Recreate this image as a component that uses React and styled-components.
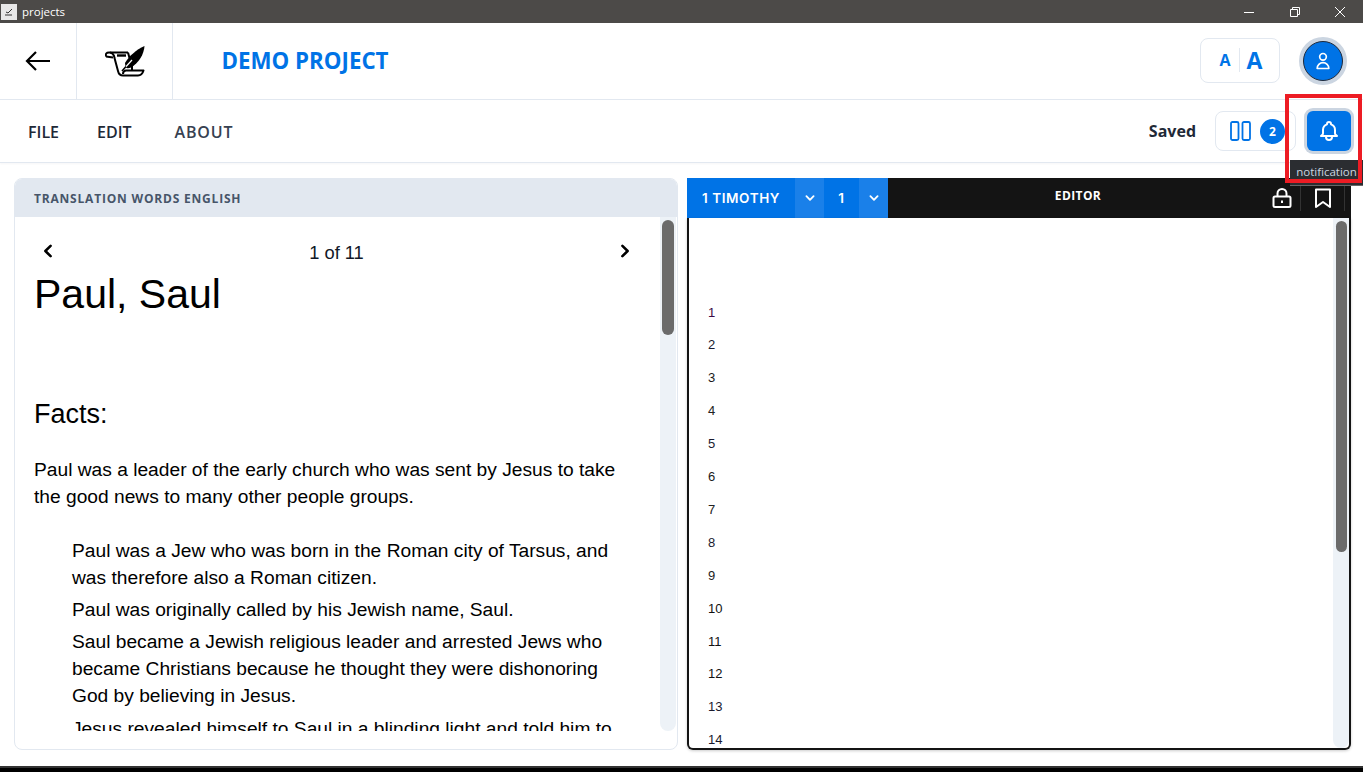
import React from "react";
import styled, { createGlobalStyle } from "styled-components";
import { HiOutlineBell, HiOutlineUser, HiChevronDown, HiChevronLeft, HiChevronRight } from "react-icons/hi";

const GlobalStyle = createGlobalStyle`
  html, body { margin: 0; padding: 0; background: #fff; overflow: hidden; }
  * { box-sizing: border-box; }
`;

const uiFont = `"Open Sans", "Noto Sans", sans-serif`;
const docFont = `"Liberation Sans", Arial, sans-serif`;
const blue = "#0073e6";

const Frame = styled.div`
  position: relative;
  width: 1363px;
  height: 772px;
  display: flex;
  flex-direction: column;
  font-family: ${uiFont};
  background: #fff;
`;

const TitleBar = styled.div`
  height: 23px;
  flex: none;
  background: #4c4a48;
  color: #fff;
  display: flex;
  align-items: center;
  padding-left: 1px;
  font-size: 11.5px;
`;
const AppIcon = styled.span`
  width: 16px;
  height: 16px;
  background: #e8e8e8;
  display: flex;
  align-items: center;
  justify-content: center;
  margin-right: 5px;
`;
const WindowButtons = styled.div`
  margin-left: auto;
  display: flex;
  align-items: center;
  padding-right: 17px;
  gap: 33.5px;
`;

const Header = styled.header`
  height: 77px;
  flex: none;
  display: flex;
  align-items: stretch;
  border-bottom: 1px solid #e2e8f0;
`;
const HeaderCell = styled.div`
  width: ${(p) => p.$w}px;
  flex: none;
  display: flex;
  align-items: center;
  justify-content: center;
  border-right: 1px solid #e2e8f0;
`;
const ProjectName = styled.h1`
  margin: 0 0 2px 48.5px;
  align-self: center;
  font-size: 22.3px;
  font-weight: 700;
  color: ${blue};
`;
const HeaderRight = styled.div`
  margin-left: auto;
  display: flex;
  align-items: center;
  padding-right: 16px;
`;
const FontSizer = styled.div`
  width: 80px;
  height: 45px;
  border: 1px solid #e2e8f0;
  border-radius: 8px;
  display: flex;
  align-items: center;
  justify-content: center;
  margin-right: 19px;
  margin-top: -2px;
  padding-left: 2px;
  color: ${blue};
  font-weight: 700;
`;
const SmallA = styled.span`
  font-size: 16px;
  padding-right: 8px;
  border-right: 1px solid #e2e8f0;
  line-height: 24px;
  margin-right: 7px;
`;
const BigA = styled.span`
  font-size: 23px;
  line-height: 24px;
`;
const Avatar = styled.div`
  width: 40px;
  height: 40px;
  margin: 0 4px;
  border-radius: 50%;
  background: ${blue};
  border: 1px solid #1e293b;
  box-shadow: 0 0 0 4px #cbd5e1;
  color: #fff;
  display: flex;
  align-items: center;
  justify-content: center;
`;

const NavBar = styled.nav`
  height: 63px;
  flex: none;
  display: flex;
  align-items: center;
  padding-left: 28px;
  border-bottom: 1px solid #e2e8f0;
  box-shadow: 0 1px 2px rgba(15, 23, 42, 0.04);
`;
const MenuItem = styled.span`
  font-size: 16px;
  font-weight: 600;
  padding-top: 2px;
  color: ${(p) => p.$color || "#1f2937"};
  margin-right: ${(p) => p.$gap}px;
  letter-spacing: ${(p) => p.$track || 0}px;
`;
const NavRight = styled.div`
  margin-left: auto;
  display: flex;
  align-items: center;
  padding-right: 12px;
`;
const Saved = styled.span`
  font-size: 16px;
  font-weight: 700;
  color: #1f2937;
  margin-right: 19px;
`;
const PaneButton = styled.div`
  width: 81px;
  height: 40px;
  border: 1px solid #e2e8f0;
  border-radius: 8px;
  display: flex;
  align-items: center;
  padding-left: 14px;
  gap: 9px;
  margin-right: 11px;
  color: ${blue};
`;
const Badge = styled.span`
  width: 25px;
  height: 25px;
  border-radius: 50%;
  background: ${blue};
  color: #fff;
  font-size: 12px;
  font-weight: 700;
  display: flex;
  align-items: center;
  justify-content: center;
`;
const BellButton = styled.div`
  width: 44px;
  height: 40px;
  border-radius: 6px;
  background: ${blue};
  color: #fff;
  box-shadow: 0 0 0 3px #cbd5e1;
  display: flex;
  align-items: center;
  justify-content: center;
`;

const Main = styled.main`
  flex: 1;
  min-height: 0;
  padding: 15px 0 16px 14px;
  display: grid;
  grid-template-columns: 664px 664px;
  grid-template-rows: minmax(0, 1fr);
  column-gap: 9px;
`;

const LeftPanel = styled.section`
  border: 1px solid #e2e8f0;
  border-radius: 8px;
  overflow: hidden;
  display: flex;
  flex-direction: column;
`;
const LeftHead = styled.div`
  height: 38px;
  flex: none;
  background: #e2e8f0;
  display: flex;
  align-items: center;
  padding-left: 19px;
  font-size: 12px;
  font-weight: 700;
  letter-spacing: 0.8px;
  color: #475569;
`;
const LeftBody = styled.div`
  height: 514px;
  flex: none;
  display: flex;
  padding-right: 1px;
`;
const Article = styled.article`
  flex: 1;
  min-width: 0;
  overflow: hidden;
  padding: 17px 24px 0 19px;
  font-family: ${docFont};
  color: #000;
  font-size: 19.2px;
  line-height: 26.88px;
`;
const Pager = styled.div`
  height: 34px;
  display: flex;
  align-items: center;
  justify-content: space-between;
  padding-left: 1px;
  margin-right: -2px;
`;
const PageLabel = styled.span`
  color: #111827;
  font-size: 18.3px;
  padding-top: 4px;
`;
const Title = styled.h1`
  margin: 2px 0 0;
  font-size: 41px;
  font-weight: 400;
  line-height: 48px;
`;
const Subtitle = styled.h2`
  margin: 78px 0 0;
  font-size: 27px;
  font-weight: 400;
  line-height: 36px;
`;
const Para = styled.p`
  margin: 25px 0 0;
`;
const PointList = styled.ul`
  list-style: none;
  margin: 27px 0 0;
  padding: 0 0 0 38px;
`;
const Point = styled.li`
  margin-bottom: 5.5px;
`;

const Track = styled.div`
  width: 16px;
  flex: none;
  background: #edf2f7;
  border-radius: 0 0 8px 8px;
  padding: ${(p) => p.$pad};
`;
const Thumb = styled.div`
  height: ${(p) => p.$h}px;
  background: #6b6b6b;
  border-radius: 8px;
`;

const RightPanel = styled.section`
  display: flex;
  flex-direction: column;
  min-height: 0;
`;
const EditorHead = styled.div`
  height: 40px;
  flex: none;
  background: #141414;
  display: flex;
  align-items: stretch;
  color: #fff;
`;
const RefCell = styled.div`
  width: ${(p) => p.$w}px;
  background: ${(p) => (p.$light ? "#1a80e9" : blue)};
  display: flex;
  align-items: center;
  justify-content: center;
  font-family: "Inter", ${uiFont};
  font-size: 13.5px;
  font-weight: 600;
  letter-spacing: 0.6px;
`;
const EditorTitle = styled.div`
  flex: 1;
  display: flex;
  align-items: center;
  justify-content: center;
  padding-bottom: 5px;
  padding-left: 5px;
  font-size: 12px;
  font-weight: 700;
  letter-spacing: 0.4px;
`;
const HeadIcons = styled.div`
  display: flex;
  align-items: center;
  padding-right: 6px;
`;
const HeadIcon = styled.span`
  width: ${(p) => p.$w}px;
  height: 26px;
  display: flex;
  align-items: center;
  justify-content: center;
  border-right: 1px solid #333;
`;
const EditorBody = styled.div`
  flex: 1;
  min-height: 0;
  display: flex;
  border: 2px solid #141414;
  border-top: 0;
  border-radius: 0 0 6px 6px;
  box-shadow: 0 1px 3px rgba(0, 0, 0, 0.2);
  overflow: hidden;
`;
const Verses = styled.div`
  flex: 1;
  overflow: hidden;
  padding: 77.6px 0 0 19px;
  font-family: ${docFont};
  font-size: 13px;
`;
const VerseNo = styled.div`
  height: 32.9px;
  line-height: 33px;
  color: ${(p) => p.$color || "#1a1a2e"};
`;

const TaskBar = styled.div`
  height: 6px;
  flex: none;
  background: #000;
  border-top: 2px solid #333;
`;

const Highlight = styled.div`
  position: absolute;
  left: 1285px;
  top: 94px;
  width: 77px;
  height: 89px;
  border: 4px solid #ed1c24;
  z-index: 3;
  pointer-events: none;
`;
const Tooltip = styled.div`
  position: absolute;
  left: 1290px;
  top: 160px;
  width: 73px;
  height: 26px;
  padding-bottom: 2px;
  background: #2b2d31;
  color: #cbd5e1;
  font-size: 11.5px;
  display: flex;
  align-items: center;
  justify-content: center;
  z-index: 2;
  border-bottom: 1px solid #666;
`;

const BackArrow = () => (
  <svg width="28" height="24" viewBox="0 0 28 24" fill="none" stroke="#000" strokeWidth="2.2">
    <path d="M26 12H3M12 3l-9 9 9 9" />
  </svg>
);

const ScrollLogo = () => (
  <svg width="40" height="31" viewBox="0 0 40 31" fill="none" stroke="#000" strokeWidth="2" strokeLinejoin="round">
    <path d="M1 10.500Q0 6.500 4 6.500H23" />
    <path d="M1 10.500L8 11.500" />
    <path d="M5 6.500Q9 7.500 9.500 12L13 25Q14 29.500 18 29.500H33Q37 29.500 38.500 24.500H21Q18 24.500 18 28" />
    <path d="M23 6.500L24.500 12" />
    <path d="M12 9.500H21" strokeWidth="2.400" />
    <path d="M27 20V24" />
    <path d="M20 17C24 10 31 4 39.500 0C39 8 34 17 26 21.500C24 22.500 21.500 22.500 20.500 21.500Z" fill="#000" stroke="none" />
    <path d="M17 25L27 14" stroke="#fff" strokeWidth="1.200" />
    <path d="M17 25L21 20.500" stroke="#000" strokeWidth="1.600" />
  </svg>
);

const PanesIcon = () => (
  <svg width="21" height="20" viewBox="0 0 21 20" fill="none" stroke={blue} strokeWidth="1.800">
    <rect x="1" y="1" width="7.500" height="18" rx="1.500" />
    <rect x="12.500" y="1" width="7.500" height="18" rx="1.500" />
  </svg>
);

const LockIcon = () => (
  <svg width="20" height="20" viewBox="0 0 20 20" fill="none" stroke="#fff" strokeWidth="2">
    <rect x="1.500" y="8.500" width="17" height="10.500" rx="1.500" />
    <path d="M5.500 8.500V5.500a4.500 4.500 0 0 1 9 0v3" />
    <path d="M10 12.500v2.500" />
  </svg>
);

const BookmarkIcon = () => (
  <svg width="18" height="20" viewBox="0 0 18 20" fill="none" stroke="#fff" strokeWidth="2" strokeLinejoin="round">
    <path d="M2 1.500h14V19l-7-5-7 5z" />
  </svg>
);

const verseColors = ["#3b0a45", "#1a1a2e", "#1a1a1a", "#222", "#1a1a2e", "#1a1a1a", "#222", "#1a1a2e", "#222", "#111", "#111", "#111", "#1a1a2e", "#1a1a2e"];

export default function App() {
  return (
    <Frame>
      <GlobalStyle />
      <TitleBar>
        <AppIcon>
          <svg width="10" height="10" viewBox="0 0 10 10" fill="none" stroke="#333" strokeWidth="1">
            <path d="M1 8h7M2 5l2 1 4-4" />
          </svg>
        </AppIcon>
        projects
        <WindowButtons>
          <svg width="12" height="12" viewBox="0 0 12 12" stroke="#fff" fill="none"><path d="M1 6.500h10" /></svg>
          <svg width="12" height="12" viewBox="0 0 12 12" stroke="#fff" fill="none"><path d="M1.500 3.500h7v7h-7zM3.500 3.500v-2h7v7h-2" /></svg>
          <svg width="12" height="12" viewBox="0 0 12 12" stroke="#fff" fill="none"><path d="M1 1l10 10M11 1L1 11" /></svg>
        </WindowButtons>
      </TitleBar>

      <Header>
        <HeaderCell $w={77}><BackArrow /></HeaderCell>
        <HeaderCell $w={96}><ScrollLogo /></HeaderCell>
        <ProjectName>DEMO PROJECT</ProjectName>
        <HeaderRight>
          <FontSizer>
            <SmallA>A</SmallA>
            <BigA>A</BigA>
          </FontSizer>
          <Avatar><HiOutlineUser size={20} /></Avatar>
        </HeaderRight>
      </Header>

      <NavBar>
        <MenuItem $gap={38}>FILE</MenuItem>
        <MenuItem $gap={43}>EDIT</MenuItem>
        <MenuItem $gap={0} $color="#374151" $track={0.8}>ABOUT</MenuItem>
        <NavRight>
          <Saved>Saved</Saved>
          <PaneButton>
            <PanesIcon />
            <Badge>2</Badge>
          </PaneButton>
          <BellButton><HiOutlineBell size={24} /></BellButton>
        </NavRight>
      </NavBar>

      <Main>
        <LeftPanel>
          <LeftHead>TRANSLATION WORDS ENGLISH</LeftHead>
          <LeftBody>
            <Article>
              <Pager>
                <HiChevronLeft size={26} />
                <PageLabel>1 of 11</PageLabel>
                <HiChevronRight size={26} />
              </Pager>
              <Title>Paul, Saul</Title>
              <Subtitle>Facts:</Subtitle>
              <Para>Paul was a leader of the early church who was sent by Jesus to take the good news to many other people groups.</Para>
              <PointList>
                <Point>Paul was a Jew who was born in the Roman city of Tarsus, and was therefore also a Roman citizen.</Point>
                <Point>Paul was originally called by his Jewish name, Saul.</Point>
                <Point>Saul became a Jewish religious leader and arrested Jews who became Christians because he thought they were dishonoring God by believing in Jesus.</Point>
                <Point>Jesus revealed himself to Saul in a blinding light and told him to stop hurting Christians.</Point>
              </PointList>
            </Article>
            <Track $pad="3px 2px 0"><Thumb $h={115} /></Track>
          </LeftBody>
        </LeftPanel>

        <RightPanel>
          <EditorHead>
            <RefCell $w={108}>1 TIMOTHY</RefCell>
            <RefCell $w={29} $light><HiChevronDown size={18} /></RefCell>
            <RefCell $w={35}>1</RefCell>
            <RefCell $w={29} $light><HiChevronDown size={18} /></RefCell>
            <EditorTitle>EDITOR</EditorTitle>
            <HeadIcons>
              <HeadIcon $w={38}><LockIcon /></HeadIcon>
              <HeadIcon $w={44}><BookmarkIcon /></HeadIcon>
            </HeadIcons>
          </EditorHead>
          <EditorBody>
            <Verses>
              {verseColors.map((c, i) => (
                <VerseNo key={i} $color={c}>{i + 1}</VerseNo>
              ))}
            </Verses>
            <Track $pad="3px 2px 0 3px"><Thumb $h={331} /></Track>
          </EditorBody>
        </RightPanel>
      </Main>

      <TaskBar />
      <Tooltip>notification</Tooltip>
      <Highlight />
    </Frame>
  );
}
